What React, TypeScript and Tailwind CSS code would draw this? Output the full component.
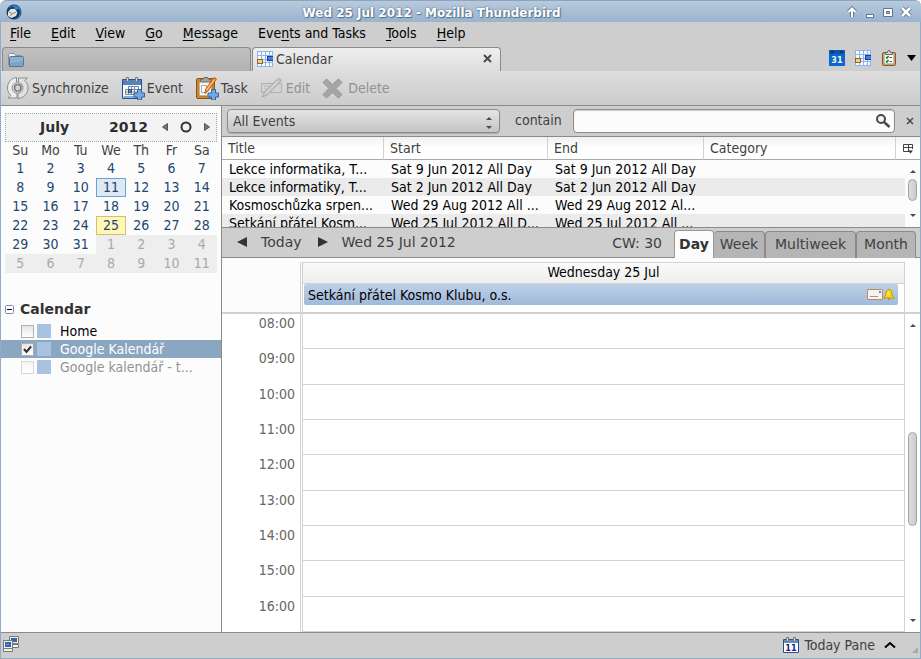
import { useState } from 'react';
import type { ReactNode } from 'react';

const menus = [
  { before: '', key: 'F', after: 'ile' },
  { before: '', key: 'E', after: 'dit' },
  { before: '', key: 'V', after: 'iew' },
  { before: '', key: 'G', after: 'o' },
  { before: '', key: 'M', after: 'essage' },
  { before: 'Eve', key: 'n', after: 'ts and Tasks' },
  { before: '', key: 'T', after: 'ools' },
  { before: '', key: 'H', after: 'elp' },
];

const weekdays = ['Su', 'Mo', 'Tu', 'We', 'Th', 'Fr', 'Sa'];

const weeks = [
  [1, 2, 3, 4, 5, 6, 7],
  [8, 9, 10, 11, 12, 13, 14],
  [15, 16, 17, 18, 19, 20, 21],
  [22, 23, 24, 25, 26, 27, 28],
  [29, 30, 31, 1, 2, 3, 4],
  [5, 6, 7, 8, 9, 10, 11],
];

const events = [
  ['Lekce informatika, T...', 'Sat 9 Jun 2012 All Day', 'Sat 9 Jun 2012 All Day'],
  ['Lekce informatiky, T...', 'Sat 2 Jun 2012 All Day', 'Sat 2 Jun 2012 All Day'],
  ['Kosmoschůzka srpen...', 'Wed 29 Aug 2012 All ...', 'Wed 29 Aug 2012 Al...'],
  ['Setkání přátel Kosm...', 'Wed 25 Jul 2012 All D...', 'Wed 25 Jul 2012 All ...'],
];

const hours = ['08:00', '09:00', '10:00', '11:00', '12:00', '13:00', '14:00', '15:00', '16:00'];

function ThunderbirdLogo() {
  return (
    <svg width="16" height="16" viewBox="0 0 16 16">
      <circle cx="8" cy="8" r="7.5" fill="#12396f" />
      <path d="M3 3.500C5 0.500 11 0 14 4c2 4 0.500 9-4 11 3-4 2-8-1-10-2-1-4-1-6-1.500z" fill="#3580c4" />
      <path d="M13 5c1.500 3 0.500 7-2.500 9 1.500-3 1.500-6 0-8z" fill="#0c2c5c" />
      <path d="M2 8l3-3.500 4 0.500 2.500 3.500-1.500 3.500L5.500 14 2 12z" fill="#e8e4d6" />
      <path d="M3 8l3.500 1.700L10.500 8M6.500 9.700L4 12" fill="none" stroke="#8b8a80" strokeWidth="1" />
      <path d="M3 4.500L6 2.500l3 1.500-3 1z" fill="#16365f" />
    </svg>
  );
}

function CalendarGridIcon() {
  return (
    <svg width="16" height="16" viewBox="0 0 16 16" shapeRendering="crispEdges">
      <path d="M0 0h16v16H0z" fill="#8fb4ec" />
      <path d="M1 1h3v3H1zM5 1h3v3H5zM9 1h3v3H9zM13 1h2v3h-2zM1 5h3v3H1zM5 5h3v3H5zM9 5h3v3H9zM1 9h3v2H1zM5 9h3v2H5zM9 9h3v2H9zM13 10h2v1h-2zM1 13h3v2H1zM5 12h3v3H5zM9 12h3v3H9zM13 12h2v3h-2z" fill="#f4f8ff" />
      <path d="M10 5h6v5h-6z" fill="#173f9a" />
      <path d="M11 6h5v3h-5z" fill="#3e82e8" />
      <path d="M0 8h6v5H0z" fill="#8c6425" />
      <path d="M1 9h4v3H1z" fill="#f3cf83" />
    </svg>
  );
}

function FolderIcon() {
  return (
    <svg width="16" height="16" viewBox="0 0 16 16">
      <path d="M0.500 13V2.500Q0.500 1.500 1.500 1.500H6l1.500 2h6v3" fill="#f3f3f3" stroke="#8a939d" />
      <path d="M1.500 14.500V5.500Q1.500 4.500 2.500 4.500h12Q15.500 4.500 15.500 5.500v8q0 1-1 1z" fill="#7ba2c9" stroke="#527699" />
      <path d="M2 5h13v4L2 11z" fill="#8fb0d1" />
    </svg>
  );
}

function SyncIcon() {
  return (
    <svg width="24" height="24" viewBox="0 0 24 24">
      <path d="M10.500 1.500C5 2 1.500 6.500 1.500 12c0 3 1.500 6 3.500 7.500l-3 2.500h9v-8l-2.500 2.500C6 14.500 6 9.500 10.500 8z" fill="#ececec" stroke="#8d8d8d" />
      <path d="M12 22.500c6-0.500 10-5 10-10.500 0-3-1.500-6-3.500-7.500l3-2.500h-9v8l2.500-2.500c3 2 2 7-3 8.500z" fill="#e2e2e2" stroke="#8d8d8d" />
      <circle cx="11.500" cy="12" r="5.500" fill="#d2d2d2" stroke="#9c9c9c" />
      <path d="M11.500 8.500c-4 0.500-4 6 0 7M12 8.500c4 0.500 4 6 0 7" fill="none" stroke="#777" strokeWidth="1.500" />
    </svg>
  );
}

function PlusBadge() {
  return <path d="M16.500 13.500h4v3.500h3v4h-3v3h-4v-3h-3.500v-4h3.500z" fill="#78a6df" stroke="#2f66a8" />;
}

function EventIcon() {
  return (
    <svg width="24" height="24" viewBox="0 0 24 24">
      <path d="M1.500 3.500h19v19h-19z" fill="#f7f9fb" stroke="#25508c" />
      <path d="M2 4h18v5H2z" fill="#5083c4" />
      <path d="M2.500 21h17" stroke="#8dadd6" strokeWidth="2" />
      <path d="M7.500 10.500h10v8H4.500v-5h13M4.500 16h13M7.500 10.500v8M10.500 10.500v8M13.500 10.500v8M17.500 10.500v8" fill="none" stroke="#7b8592" />
      <path d="M7.500 13.500h3v3h-3z" fill="#4b8fe5" stroke="#1f4f96" />
      <path d="M5.500 1.500h2v4h-2zM14.500 1.500h2v4h-2z" fill="#dedbd0" stroke="#7c796c" />
      <PlusBadge />
    </svg>
  );
}

function TaskIcon() {
  return (
    <svg width="24" height="24" viewBox="0 0 24 24">
      <rect x="1.500" y="2.500" width="18" height="20" rx="1.500" fill="#c98b3a" stroke="#8a5412" />
      <path d="M4 5h13v15H4z" fill="#f5f5f2" stroke="#a77735" />
      <path d="M5.500 6V3.500h2L9 1.500h3.500l1.500 2h2V6z" fill="#a3a398" stroke="#6c6c63" />
      <path d="M6.500 9.500h5v7h-5z" fill="#fff" stroke="#aaa" />
      <path d="M19 1.500l2.500 1.500-8.500 12-3 2.500 0.500-4z" fill="#f69436" stroke="#c65e0b" />
      <path d="M19 4l-7.500 10" stroke="#ffd19a" />
      <PlusBadge />
    </svg>
  );
}

function EditIcon() {
  return (
    <svg width="24" height="24" viewBox="0 0 24 24">
      <path d="M1.500 7.500h20v9h-20z" fill="#d3d3d3" stroke="#b0b0b0" />
      <path d="M4 10h6M4 13h4" stroke="#bdbdbd" />
      <path d="M18.500 2l3 2.500L8 18.500 2.500 21l2-5z" fill="#c6c6c6" stroke="#a8a8a8" />
      <path d="M18 5L6 17" stroke="#dedede" />
    </svg>
  );
}

function DeleteIcon() {
  return (
    <svg width="24" height="24" viewBox="0 0 24 24">
      <path d="M4.500 3L10.500 8.500 16.500 3l3.500 3.500-6 6 6 6-3.500 3.500-6-5.500-6 5.500L1 18.500l6-6-6-6z" fill="#a5a5a5" stroke="#979797" strokeLinejoin="round" />
    </svg>
  );
}

function GoogleCalendarIcon() {
  return (
    <svg width="16" height="16" viewBox="0 0 16 16">
      <rect width="16" height="16" rx="1" fill="#0a66cf" />
      <path d="M0 0h16v4H0z" fill="#0d57ae" />
      <path d="M2 1h3v2H2zM11 1h3v2h-3z" fill="#06366f" />
      <text x="8" y="13" textAnchor="middle" fontSize="9" fontWeight="bold" fill="#f2f4e4" fontFamily="DejaVu Sans Condensed, DejaVu Sans, sans-serif">31</text>
    </svg>
  );
}

function TasksIcon() {
  return (
    <svg width="16" height="16" viewBox="0 0 16 16">
      <rect x="1.500" y="2.500" width="13" height="13" rx="1" fill="#c99b67" stroke="#7e5a33" />
      <path d="M3.500 4.500h9v9h-9z" fill="#fff" stroke="#c9c5ba" />
      <path d="M4.500 4.500v-2h2q0-2 1.500-2t1.500 2h2v2z" fill="#d9d9d9" stroke="#666" />
      <path d="M5 7l1 1 1.500-2M5 11l1 1 1.500-2" fill="none" stroke="#138a2c" strokeWidth="1.500" />
      <path d="M8.500 7.500H11M8.500 11.500H11" stroke="#555" />
    </svg>
  );
}

function Triangle({ dir, size = 'small' }: { dir: 'up' | 'down'; size?: 'small' | 'large' }) {
  const large = size === 'large';
  return (
    <svg width={large ? 9 : 6} height={large ? 6 : 3} viewBox="0 0 10 6" className="shrink-0" preserveAspectRatio="none">
      <path d={dir === 'up' ? 'M0 6L5 0l5 6z' : 'M0 0h10L5 6z'} fill={large ? '#000' : '#4a4a4a'} />
    </svg>
  );
}

function ToolButton({ icon, label, disabled }: { icon: ReactNode; label: string; disabled?: boolean }) {
  return (
    <button disabled={disabled} className="flex items-center gap-0.5 text-[#3f3f3f] disabled:text-[#929292]">
      {icon}
      <span>{label}</span>
    </button>
  );
}

function TitleBar() {
  return (
    <header className="flex h-[22px] shrink-0 items-center rounded-t-md border-t border-[#8ca4bf] bg-linear-to-b from-[#b8cadc] to-[#9bb3cf] pr-2 pl-1.5">
      <ThunderbirdLogo />
      <h1 className="flex-1 pt-0.5 text-center font-['DejaVu_Sans',sans-serif] text-[12px] leading-4 font-bold text-white [text-shadow:0_0_2px_#47607c,1px_1px_1px_#5b7594]">
        Wed 25 Jul 2012 - Mozilla Thunderbird
      </h1>
      <div className="flex w-[72px] items-center justify-end gap-1">
        <button aria-label="Shade">
          <svg width="14" height="14" viewBox="0 0 14 14">
            <path d="M7 12V4M3.500 7L7 3.500 10.500 7" fill="none" stroke="#5d7896" strokeWidth="4" />
            <path d="M7 12V4M3.500 7L7 3.500 10.500 7" fill="none" stroke="#fff" strokeWidth="2" />
          </svg>
        </button>
        <button aria-label="Minimize">
          <svg width="14" height="14" viewBox="0 0 14 14"><path d="M3.500 9.500h7v3h-7z" fill="#fff" stroke="#5d7896" /></svg>
        </button>
        <button aria-label="Maximize">
          <svg width="14" height="14" viewBox="0 0 14 14">
            <path d="M2.500 3.500h9v8h-9z" fill="#fff" stroke="#5d7896" />
            <path d="M5.500 6.500h3v2h-3z" fill="#9bb3cf" stroke="#5d7896" />
          </svg>
        </button>
        <button aria-label="Close">
          <svg width="14" height="14" viewBox="0 0 14 14">
            <path d="M3 3l8 8M11 3l-8 8" stroke="#5d7896" strokeWidth="4.500" />
            <path d="M3 3l8 8M11 3l-8 8" stroke="#fff" strokeWidth="2.500" />
          </svg>
        </button>
      </div>
    </header>
  );
}

function TabStrip() {
  return (
    <div className="flex h-6 shrink-0 pl-px">
      <div className="flex w-[249px] items-center rounded-t border-x border-t border-[#8a8a8a] bg-linear-to-b from-[#c0c0c0] to-[#b2b2b2] px-[5px]">
        <FolderIcon />
      </div>
      <div className="ml-px flex w-[249px] items-center gap-[3px] rounded-t border-x border-t border-[#8a8a8a] bg-linear-to-b from-[#efefef] to-[#dddddd] pr-1 pb-0.5 pl-1 text-[#3f3f3f]">
        <CalendarGridIcon />
        <span className="flex-1">Calendar</span>
        <button aria-label="Close tab" className="p-1">
          <svg width="9" height="9" viewBox="0 0 9 9"><path d="M1 1l7 7M8 1L1 8" stroke="#4a4a4a" strokeWidth="2" /></svg>
        </button>
      </div>
      <div className="flex flex-1 items-center justify-end gap-[10px] pr-1 pb-0.5">
        <button aria-label="Google Calendar"><GoogleCalendarIcon /></button>
        <button aria-label="Open calendar"><CalendarGridIcon /></button>
        <button aria-label="Open tasks"><TasksIcon /></button>
        <button aria-label="All tabs"><Triangle dir="down" size="large" /></button>
      </div>
    </div>
  );
}

function dayClass(week: number, day: number) {
  if ((week === 4 && day < 20) || week === 5) return 'bg-[#eeeeee] text-[#aaaaaa]';
  if (week === 1 && day === 11) return 'bg-[#dfe8f3] text-[#23466f] outline outline-1 -outline-offset-1 outline-[#62a5d8]';
  if (week === 3 && day === 25) return 'bg-[#fff8b5] text-[#23466f] outline outline-1 -outline-offset-1 outline-[#d5bd78]';
  return 'text-[#23466f]';
}

function MiniMonth() {
  return (
    <div className="mx-1 mt-[7px]">
      <div className="flex h-[29px] items-center border border-dotted border-[#aaaaaa] bg-[#f3f3f3] pb-px font-['DejaVu_Sans',sans-serif] font-bold text-[#2e2e2e]">
        <span className="flex-1 pl-[34px]">July</span>
        <span className="mr-[14px]">2012</span>
        <button aria-label="Previous month">
          <svg width="6" height="8" viewBox="0 0 6 8"><path d="M5.500 0.500v7L0.500 4z" fill="#777" stroke="#555" /></svg>
        </button>
        <button aria-label="Today" className="mx-3">
          <svg width="12" height="12" viewBox="0 0 12 12"><circle cx="6" cy="6" r="4.500" fill="none" stroke="#333" strokeWidth="2" /></svg>
        </button>
        <button aria-label="Next month" className="mr-1.5">
          <svg width="6" height="8" viewBox="0 0 6 8"><path d="M0.500 0.500v7L5.500 4z" fill="#777" stroke="#555" /></svg>
        </button>
      </div>
      <table className="w-full table-fixed border-collapse text-center">
        <thead>
          <tr className="h-[17px] leading-4 text-[#3f3f3f]">
            {weekdays.map((d) => <th key={d} className="p-0 align-top font-normal">{d}</th>)}
          </tr>
        </thead>
        <tbody>
          {weeks.map((days, w) => (
            <tr key={w} className="h-[19px] leading-[19px]">
              {days.map((d) => <td key={d} className={`p-0 ${dayClass(w, d)}`}>{d}</td>)}
            </tr>
          ))}
        </tbody>
      </table>
    </div>
  );
}

function CalendarItem({ name, checked, selected, disabled }: { name: string; checked?: boolean; selected?: boolean; disabled?: boolean }) {
  const [on, setOn] = useState(!!checked);
  const row = selected ? 'bg-[#8ba6c0] text-white' : disabled ? 'text-[#929292]' : 'text-black';
  return (
    <label className={`flex h-[18px] items-center pl-5 leading-[18px] ${row}`}>
      <span className="relative mr-[3px] flex size-[13px]">
        <input
          type="checkbox"
          checked={on}
          disabled={disabled}
          onChange={(e) => setOn(e.target.checked)}
          className="size-[13px] appearance-none border border-[#b0b0b0] bg-linear-to-b from-[#e6e6e6] to-white disabled:border-[#d8d8d8] disabled:from-[#f4f4f4]"
        />
        {on && (
          <svg width="13" height="13" viewBox="0 0 13 13" className="pointer-events-none absolute inset-0">
            <path d="M3 6l2.500 3L10 3.500" fill="none" stroke="#333" strokeWidth="2" />
          </svg>
        )}
      </span>
      <span className="mr-[9px] size-[14px] bg-[#a8c2e1]" />
      {name}
    </label>
  );
}

function Sidebar() {
  return (
    <aside className="w-[221px] shrink-0 border-r border-[#8a8a8a] bg-[#fcfcfc]">
      <MiniMonth />
      <div className="mt-[27px] flex h-[18px] items-center gap-1.5 pl-1 font-['DejaVu_Sans',sans-serif] font-bold text-[#333]">
        <button aria-label="Collapse">
          <svg width="9" height="9" viewBox="0 0 9 9"><rect x="0.500" y="0.500" width="8" height="8" rx="1" fill="#fff" stroke="#8484b8" /><path d="M2 4.500h5" stroke="#000" /></svg>
        </button>
        <h2>Calendar</h2>
      </div>
      <div className="mt-1">
        <CalendarItem name="Home" />
        <CalendarItem name="Google Kalendář" checked selected />
        <CalendarItem name="Google kalendář - t..." disabled />
      </div>
    </aside>
  );
}

function FilterBar() {
  return (
    <div className="flex h-[31px] shrink-0 items-center border-b border-[#8a8a8a] pl-[5px] text-[#3f3f3f]">
      <div className="relative flex w-[273px]">
        <select aria-label="Filter" className="h-6 w-full appearance-none rounded-sm border border-[#8c8c8c] bg-linear-to-b from-[#e4e4e4] to-[#c5c5c5] pl-[5px] shadow-[0_1px_1px_#aaa]">
          <option>All Events</option>
        </select>
        <span className="pointer-events-none absolute top-1.5 right-2 flex flex-col gap-1.5 pt-0.5">
          <Triangle dir="up" />
          <Triangle dir="down" />
        </span>
      </div>
      <label htmlFor="find" className="mr-[11px] ml-[15px] pb-0.5">contain</label>
      <div className="relative flex flex-1">
        <input id="find" type="text" className="h-6 w-full rounded-sm border border-[#8c8c8c] bg-[#fcfcfc] px-2 shadow-[inset_0_1px_1px_#ccc]" />
        <svg width="16" height="16" viewBox="0 0 16 16" className="absolute top-1 right-1">
          <circle cx="6" cy="6" r="4" fill="#f2f2f2" stroke="#4a4a4a" strokeWidth="2" />
          <path d="M9 9l5.500 5" stroke="#4a4a4a" strokeWidth="2.500" />
        </svg>
      </div>
      <button aria-label="Close filter" className="pr-1.5 pl-[11px]">
        <svg width="8" height="8" viewBox="0 0 8 8"><path d="M1 1l6 6M7 1L1 7" stroke="#4a4a4a" strokeWidth="1.500" /></svg>
      </button>
    </div>
  );
}

function EventList() {
  return (
    <div className="relative h-[91px] shrink-0 overflow-hidden border-b border-[#8a8a8a] bg-[#fcfcfc]">
      <table className="w-full table-fixed border-separate border-spacing-0">
        <thead>
          <tr className="h-[23px] bg-linear-to-b from-[#f1f1f1] via-white to-white text-left text-[#3f3f3f] [&>th]:border-b [&>th]:border-[#a8a8a8] [&>th]:p-0 [&>th]:pl-1.5 [&>th]:font-normal">
            <th className="w-[162px] border-r border-r-[#d2d2d2]!">Title</th>
            <th className="w-[164px] border-r border-r-[#d2d2d2]!">Start</th>
            <th className="w-[156px] border-r border-r-[#d2d2d2]!">End</th>
            <th className="border-r border-r-[#d2d2d2]!">Category</th>
            <th className="w-6">
              <button aria-label="Select columns" className="flex">
                <svg width="12" height="11" viewBox="0 0 12 11">
                  <path d="M7 8.500H1.500v-7h9V6M1 4.500h10M6.500 2v6" fill="none" stroke="#444" />
                  <path d="M6 7.500h5L8.500 10.500z" fill="#333" />
                </svg>
              </button>
            </th>
          </tr>
        </thead>
        <tbody>
          {events.map(([title, start, end]) => (
            <tr key={title} className="h-[18px] leading-[18px] whitespace-nowrap text-black even:bg-[#ebebeb] [&>td]:p-0 [&>td]:pl-[7px]">
              <td>{title}</td>
              <td>{start}</td>
              <td>{end}</td>
              <td colSpan={2} />
            </tr>
          ))}
        </tbody>
      </table>
      <div className="absolute right-0 bottom-0 flex h-[67px] w-[15px] flex-col items-center bg-[#fcfcfc] pt-2.5 pb-2.5">
        <Triangle dir="up" />
        <div className="mt-1.5 mb-auto h-[22px] w-[9px] rounded-full border border-[#a2a2a2] bg-linear-to-r from-[#dedede] to-[#cbcbcb]" />
        <Triangle dir="down" />
      </div>
    </div>
  );
}

function ViewTab({ label, active, className }: { label: string; active?: boolean; className: string }) {
  const look = active
    ? 'h-7 border-[#999999] bg-[#fcfcfc] font-bold text-[#333]'
    : 'h-[27px] border-[#8a8a8a] bg-[#b5b5b5]';
  return (
    <button role="tab" aria-selected={!!active} className={`rounded-t border-x border-t pb-0.5 text-center ${look} ${className}`}>
      {label}
    </button>
  );
}

function ViewBar() {
  return (
    <div className="flex h-[30px] shrink-0 items-center border-b border-[#8a8a8a] pr-1 font-['DejaVu_Sans',sans-serif] text-[#3f3f3f]">
      <div className="flex flex-1 items-center pb-0.5">
        <button aria-label="Previous day" className="pl-[15px]">
          <svg width="10" height="10" viewBox="0 0 10 10"><path d="M10 0v10L0 5z" fill="#333" /></svg>
        </button>
        <button className="ml-[14px]">Today</button>
        <button aria-label="Next day" className="ml-4">
          <svg width="10" height="10" viewBox="0 0 10 10"><path d="M0 0v10L10 5z" fill="#333" /></svg>
        </button>
        <span className="ml-[14px]">Wed 25 Jul 2012</span>
      </div>
      <span className="mr-3">CW: 30</span>
      <div role="tablist" className="-mb-0.5 flex items-end self-end pb-px">
        <ViewTab label="Day" active className="w-10" />
        <ViewTab label="Week" className="w-[51px] border-l-0" />
        <ViewTab label="Multiweek" className="w-[91px]" />
        <ViewTab label="Month" className="w-[60px]" />
      </div>
    </div>
  );
}

function DayView() {
  return (
    <section className="flex min-h-0 flex-1 flex-col bg-white">
      <div className="flex h-14 shrink-0 border-b-2 border-[#d2d2d2] bg-[#fcfcfc] pt-1">
        <div className="w-[79px] border-r border-[#d2d2d2]" />
        <div className="ml-px flex-1 border-x border-t border-[#d2d2d2] bg-white">
          <h3 className="h-[21px] border-b border-[#d2d2d2] bg-linear-to-b from-[#fafafa] to-[#eeeeee] text-center leading-[18px] text-black">
            Wednesday 25 Jul
          </h3>
          <div className="mr-1.5 ml-px flex h-[21px] items-center rounded-xs bg-linear-to-b from-[#bdd0e8] to-[#a0bad9] pr-[3px] pl-1 text-black">
            <span className="flex-1">Setkání přátel Kosmo Klubu, o.s.</span>
            <svg width="16" height="11" viewBox="0 0 16 11">
              <path d="M0.500 0.500h15v10h-15z" fill="#f7f3ea" stroke="#b98a6b" />
              <path d="M3 7.500h8" stroke="#999" />
              <path d="M12 2h2v2h-2z" fill="#7474d8" />
            </svg>
            <svg width="12" height="12" viewBox="0 0 12 12">
              <path d="M6 0.500c2.500 0 3 2 3 4s1 3 2.500 4.500h-11C2 7.500 3 6.500 3 4.500s0.500-4 3-4z" fill="#f4d419" stroke="#c29a06" />
              <path d="M4.500 9.500q1.500 3 3 0z" fill="#b58a05" />
              <path d="M5 2.500v4" stroke="#fff7a8" />
            </svg>
          </div>
        </div>
        <div className="w-[15px]" />
      </div>
      <div className="flex min-h-0 flex-1">
        <div className="flex w-[79px] flex-col border-r border-[#d2d2d2]">
          {hours.map((h) => (
            <div key={h} className="flex-1 pr-[5px] text-right leading-[18px] text-[#666666]">{h}</div>
          ))}
        </div>
        <div className="ml-px flex flex-1 flex-col border-x border-[#d2d2d2]">
          {hours.map((h) => (
            <div key={h} className="flex-1 border-b border-[#d2d2d2]" />
          ))}
        </div>
        <div className="flex w-[15px] flex-col items-center py-2.5">
          <Triangle dir="up" />
          <div className="mt-[105px] mb-auto h-[94px] w-[9px] rounded-full border border-[#a2a2a2] bg-linear-to-r from-[#dedede] to-[#cbcbcb]" />
          <Triangle dir="down" />
        </div>
      </div>
    </section>
  );
}

function StatusBar() {
  return (
    <footer className="flex h-[26px] shrink-0 items-center border-t border-[#8a8a8a] pl-0.5 text-[#3f3f3f]">
      <svg width="16" height="16" viewBox="0 0 16 16" className="mb-1">
        <path d="M6.500 0.500h9v7h-9z" fill="#f2f2ee" stroke="#777" />
        <path d="M8 2h6v4H8z" fill="#3264b0" />
        <path d="M9.500 8.500h6v3h-6z" fill="#f2f2ee" stroke="#777" />
        <path d="M0.500 4.500h9v8h-9z" fill="#f2f2ee" stroke="#777" />
        <path d="M2 6h6v5H2z" fill="#3264b0" />
        <path d="M3 8h3v1H3z" fill="#7fa2dc" />
        <path d="M0.500 12.500h9v3h-9z" fill="#f2f2ee" stroke="#777" />
      </svg>
      <button className="ml-auto flex items-center gap-[5px] pb-0.5">
        <svg width="16" height="16" viewBox="0 0 16 16">
          <path d="M0.500 2.500h15v13h-15z" fill="#fff" stroke="#25508c" />
          <path d="M1 3h14v3H1z" fill="#5f8fca" />
          <path d="M3.500 0.500h2v4h-2zM10.500 0.500h2v4h-2z" fill="#dedbd0" stroke="#7c796c" />
          <text x="8" y="14" textAnchor="middle" fontSize="9" fontWeight="bold" fill="#1b1b8f" fontFamily="DejaVu Sans Condensed, DejaVu Sans, sans-serif">11</text>
        </svg>
        Today Pane
        <svg width="12" height="8" viewBox="0 0 12 8" className="ml-1"><path d="M1 6.500L6 2l5 4.500" fill="none" stroke="#000" strokeWidth="2" /></svg>
      </button>
      <svg width="6" height="6" viewBox="0 0 6 6" className="mt-2 mr-0.5 ml-4"><path d="M6 0v6H0z" fill="#a8a8a8" /></svg>
    </footer>
  );
}

export default function App() {
  return (
    <div className="flex h-screen min-h-[500px] flex-col overflow-hidden bg-white font-['DejaVu_Sans_Condensed','DejaVu_Sans',sans-serif] text-[14px] leading-5">
      <TitleBar />
      <div className="flex min-h-0 flex-1 flex-col border-x border-b border-[#93abc6] bg-[#cecece]">
        <nav className="flex h-[25px] shrink-0 items-center gap-5 pb-[3px] pl-[9px] text-black">
          {menus.map((m) => (
            <button key={m.key + m.after}>
              {m.before}<span className="underline underline-offset-2">{m.key}</span>{m.after}
            </button>
          ))}
        </nav>
        <TabStrip />
        <div className="flex h-[35px] shrink-0 items-center gap-3 border-b border-[#8a8a8a] bg-linear-to-b from-[#dddddd] to-[#cccccc] pl-[5px]">
          <ToolButton icon={<SyncIcon />} label="Synchronize" />
          <ToolButton icon={<EventIcon />} label="Event" />
          <ToolButton icon={<TaskIcon />} label="Task" />
          <ToolButton icon={<EditIcon />} label="Edit" disabled />
          <ToolButton icon={<DeleteIcon />} label="Delete" disabled />
        </div>
        <div className="flex min-h-0 flex-1">
          <Sidebar />
          <main className="flex min-w-0 flex-1 flex-col">
            <FilterBar />
            <EventList />
            <ViewBar />
            <DayView />
          </main>
        </div>
        <StatusBar />
      </div>
    </div>
  );
}
